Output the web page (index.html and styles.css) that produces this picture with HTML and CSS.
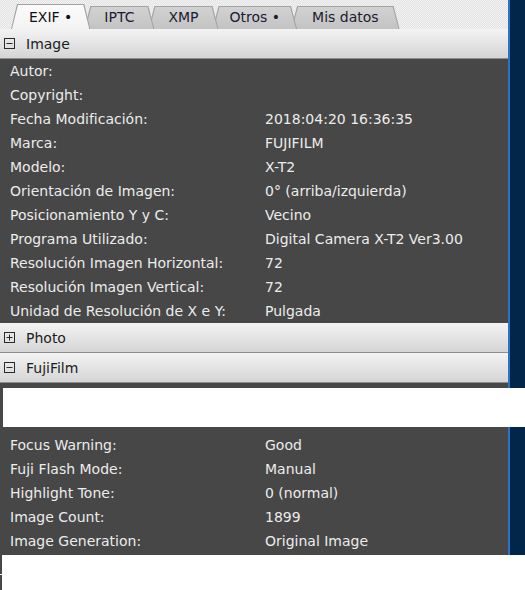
FILE: index.html
```html
<!DOCTYPE html>
<html lang="es">
<head>
    <meta charset="UTF-8">
    <title>Metadatos</title>
    <link rel="stylesheet" href="styles.css">
</head>
<body>
    <div class="app">
        <div class="panel">
            <nav class="tabs">
                <div class="tab active">EXIF •</div>
                <div class="tab t2">IPTC</div>
                <div class="tab t3">XMP</div>
                <div class="tab t4">Otros •</div>
                <div class="tab t5">Mis datos</div>
            </nav>

            <section class="group">
                <div class="group-head">
                    <svg class="toggle" width="11" height="11" viewBox="0 0 11 11"><rect x="0.5" y="0.5" width="10" height="10" fill="none" stroke="#2a2a2a"/><path d="M2.5 5.5h6" stroke="#2a2a2a"/></svg>
                    <span>Image</span>
                </div>
                <div class="rows">
                    <div class="row"><span>Autor:</span><span></span></div>
                    <div class="row"><span>Copyright:</span><span></span></div>
                    <div class="row"><span>Fecha Modificación:</span><span>2018:04:20 16:36:35</span></div>
                    <div class="row"><span>Marca:</span><span>FUJIFILM</span></div>
                    <div class="row"><span>Modelo:</span><span>X-T2</span></div>
                    <div class="row"><span>Orientación de Imagen:</span><span>0° (arriba/izquierda)</span></div>
                    <div class="row"><span>Posicionamiento Y y C:</span><span>Vecino</span></div>
                    <div class="row"><span>Programa Utilizado:</span><span>Digital Camera X-T2 Ver3.00</span></div>
                    <div class="row"><span>Resolución Imagen Horizontal:</span><span>72</span></div>
                    <div class="row"><span>Resolución Imagen Vertical:</span><span>72</span></div>
                    <div class="row"><span>Unidad de Resolución de X e Y:</span><span>Pulgada</span></div>
                </div>
            </section>

            <section class="group">
                <div class="group-head">
                    <svg class="toggle" width="11" height="11" viewBox="0 0 11 11"><rect x="0.5" y="0.5" width="10" height="10" fill="none" stroke="#2a2a2a"/><path d="M2.5 5.5h6M5.5 2.5v6" stroke="#2a2a2a"/></svg>
                    <span>Photo</span>
                </div>
            </section>

            <section class="group">
                <div class="group-head">
                    <svg class="toggle" width="11" height="11" viewBox="0 0 11 11"><rect x="0.5" y="0.5" width="10" height="10" fill="none" stroke="#2a2a2a"/><path d="M2.5 5.5h6" stroke="#2a2a2a"/></svg>
                    <span>FujiFilm</span>
                </div>
                <div class="rows last">
                    <div class="skip"></div>
                    <div class="row"><span>Focus Warning:</span><span>Good</span></div>
                    <div class="row"><span>Fuji Flash Mode:</span><span>Manual</span></div>
                    <div class="row"><span>Highlight Tone:</span><span>0 (normal)</span></div>
                    <div class="row"><span>Image Count:</span><span>1899</span></div>
                    <div class="row"><span>Image Generation:</span><span>Original Image</span></div>
                </div>
            </section>
        </div>
        <div class="edge"></div>
        <div class="blank"></div>
    </div>
    <div class="tail">
        <div class="tail-a"></div>
        <div class="tail-b"></div>
    </div>
</body>
</html>
```

FILE: styles.css
```css
:root {
    --panel-bg: #474747;
    --row-text: #ececec;
    --head-text: #1c1c1c;
    --navy: #02254a;
    --edge-blue: #2a74c4;
}

* {
    margin: 0;
    padding: 0;
    box-sizing: border-box;
}

body {
    font-family: "DejaVu Sans", Verdana, sans-serif;
    font-size: 14px;
    background: #ffffff;
    width: 525px;
}

.app {
    display: flex;
    position: relative;
}

.panel {
    width: 508px;
    background: var(--panel-bg);
}

.edge {
    width: 17px;
    background: var(--navy);
    border-left: 2px solid var(--edge-blue);
}

/* white block lying over the list */
.blank {
    position: absolute;
    top: 388px;
    left: 3px;
    right: 0;
    height: 39px;
    background: #ffffff;
}

/* tab strip */
.tabs {
    height: 29px;
    display: flex;
    align-items: flex-end;
    padding-left: 11px;
    background: repeating-conic-gradient(#e2e2e2 0 25%, #f3f3f3 0 50%) 0 0 / 2px 2px;
}

.tab {
    position: relative;
    height: 23px;
    line-height: 23px;
    padding: 0 18px;
    margin-right: -6px;
    color: #1b1b30;
    white-space: nowrap;
}

.tab::before,
.tab::after {
    content: "";
    position: absolute;
    inset: 0;
    z-index: -1;
    clip-path: polygon(0 100%, 6px 0, calc(100% - 6px) 0, 100% 100%);
}

.tab::before {
    background: #a2a2a2;
}

.tab::after {
    inset: 1px 1px 0 1px;
    background: linear-gradient(#d2d2d2, #c3c3c3);
}

.tab { z-index: 5; }
.tab.t2 { z-index: 4; }
.tab.t3 { z-index: 3; }
.tab.t4 { z-index: 2; }
.tab.t5 { z-index: 1; }

.tab.active {
    z-index: 6;
    height: 25px;
    line-height: 26px;
    color: #111111;
}

.tab.active::after {
    background: linear-gradient(#fbfbfb, #f3f3f3);
}

.tab.t2 { padding: 0 20px; }
.tab.t3 { padding: 0 20px; }
.tab.t4 { padding: 0 17px; }
.tab.t5 { padding: 0 21px; }

/* groups */
.group-head {
    height: 30px;
    display: flex;
    align-items: center;
    gap: 11px;
    padding-left: 4px;
    color: var(--head-text);
    background: linear-gradient(#f3f3f3, #d5d5d5);
    border-bottom: 1px solid #8d8d8d;
}

.toggle {
    flex-shrink: 0;
}

.rows {
    color: var(--row-text);
}

.rows.last {
    padding-bottom: 2px;
}

.row {
    display: grid;
    grid-template-columns: 255px 1fr;
    height: 24px;
    line-height: 24px;
    padding-left: 10px;
    white-space: nowrap;
}

.skip {
    height: 50px;
}

/* leftover border below the panel */
.tail-a {
    width: 2px;
    height: 19px;
    background: #474747;
}

.tail-b {
    width: 2px;
    height: 16px;
    margin-top: 1px;
    background: #474747;
}
```
